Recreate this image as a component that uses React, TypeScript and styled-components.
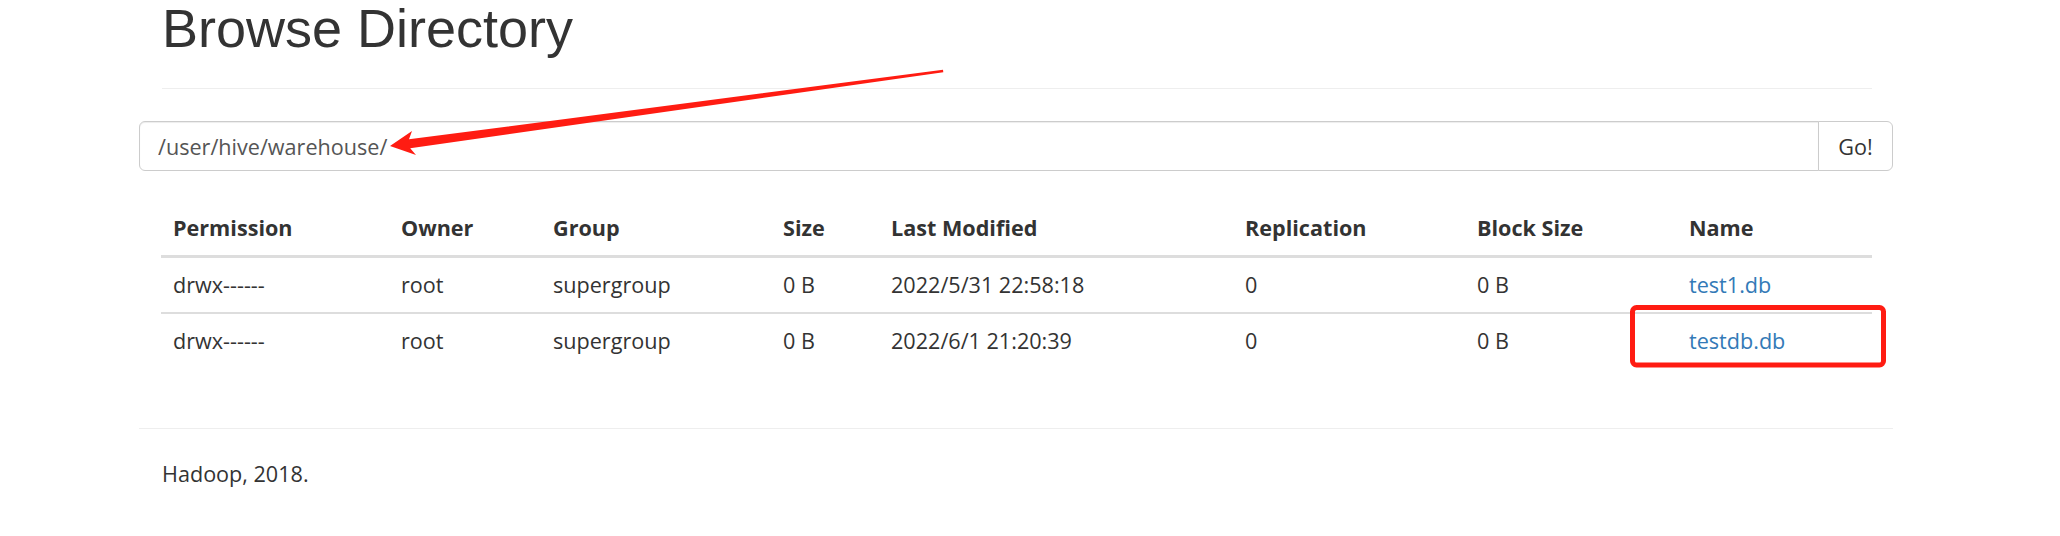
import styled, { createGlobalStyle } from "styled-components";

const GlobalStyle = createGlobalStyle`
  html, body {
    margin: 0;
    padding: 0;
    background: #fff;
  }
  body {
    font-family: "Open Sans", "Noto Sans", sans-serif;
    font-size: 21.6px;
    color: #333;
  }
`;

const files = [
  {
    permission: "drwx------",
    owner: "root",
    group: "supergroup",
    size: "0 B",
    modified: "2022/5/31 22:58:18",
    replication: "0",
    blockSize: "0 B",
    name: "test1.db",
  },
  {
    permission: "drwx------",
    owner: "root",
    group: "supergroup",
    size: "0 B",
    modified: "2022/6/1 21:20:39",
    replication: "0",
    blockSize: "0 B",
    name: "testdb.db",
  },
];

// column widths measured off the listing
const columns = [
  { label: "Permission", width: 228 },
  { label: "Owner", width: 152 },
  { label: "Group", width: 230 },
  { label: "Size", width: 108 },
  { label: "Last Modified", width: 354 },
  { label: "Replication", width: 232 },
  { label: "Block Size", width: 212 },
  { label: "Name", width: 195 },
];

const App = () => {
  return (
    <>
      <GlobalStyle />
      <Page>
        <Header>
          <Title>Browse Directory</Title>
        </Header>

        <SearchForm onSubmit={(e) => e.preventDefault()}>
          <PathInput type="text" defaultValue="/user/hive/warehouse/" />
          <GoButton type="button">Go!</GoButton>
        </SearchForm>

        <Listing>
          <colgroup>
            {columns.map((c) => (
              <col key={c.label} style={{ width: c.width }} />
            ))}
          </colgroup>
          <thead>
            <tr>
              {columns.map((c) => (
                <HeadCell key={c.label}>{c.label}</HeadCell>
              ))}
            </tr>
          </thead>
          <tbody>
            {files.map((f) => (
              <tr key={f.name}>
                <Cell>{f.permission}</Cell>
                <Cell>{f.owner}</Cell>
                <Cell>{f.group}</Cell>
                <Cell>{f.size}</Cell>
                <Cell>{f.modified}</Cell>
                <Cell>{f.replication}</Cell>
                <Cell>{f.blockSize}</Cell>
                <Cell>
                  <NameLink href="#">{f.name}</NameLink>
                </Cell>
              </tr>
            ))}
          </tbody>
        </Listing>

        <FooterRule />
        <FooterText>Hadoop, 2018.</FooterText>
      </Page>

      {/* red markup drawn on top of the screenshot */}
      <Annotations width="2060" height="536" viewBox="0 0 2060 536">
        <polygon
          fill="#ff1c12"
          points="390,146 412,131 409,139.3 943,69.8 943.3,72.2 410.2,148.2 416,155"
        />
        <rect
          x="1632.5"
          y="307.5"
          width="251"
          height="57.5"
          rx="4"
          fill="none"
          stroke="#ff1c12"
          strokeWidth="5"
        />
      </Annotations>
    </>
  );
};

export default App;

const Page = styled.div`
  width: 1754px;
  margin-left: 139px;
`;

const Header = styled.div`
  margin: 0 21px 0 23px;
  padding-bottom: 32px;
  border-bottom: 1px solid #eee;
`;

const Title = styled.h1`
  margin: 0;
  font-family: "Liberation Sans", Arial, sans-serif;
  font-size: 54px;
  font-weight: 400;
  line-height: 56px;
  color: #333;
`;

const SearchForm = styled.form`
  display: flex;
  height: 50px;
  margin: 32px 0 0;
`;

const PathInput = styled.input`
  flex: 1;
  box-sizing: border-box;
  height: 50px;
  padding: 0 18px;
  border: 1px solid #ccc;
  border-radius: 6px 0 0 6px;
  box-shadow: inset 0 1px 1px rgba(0, 0, 0, 0.075);
  font-family: "Open Sans", "Noto Sans", sans-serif;
  font-size: 21.6px;
  color: #555;
  outline: none;
`;

const GoButton = styled.button`
  box-sizing: border-box;
  width: 75px;
  height: 50px;
  margin-left: -1px;
  padding: 0;
  border: 1px solid #ccc;
  border-radius: 0 6px 6px 0;
  background: #fff;
  font-family: "Open Sans", "Noto Sans", sans-serif;
  font-size: 21.6px;
  color: #333;
  cursor: pointer;
`;

const Listing = styled.table`
  width: 1711px;
  margin: 30px 0 0 22px;
  border-collapse: collapse;
  border-spacing: 0;
  table-layout: fixed;
`;

const HeadCell = styled.th`
  padding: 12px;
  line-height: 30px;
  text-align: left;
  font-weight: 700;
  white-space: nowrap;
  border-bottom: 3px solid #ddd;
`;

const Cell = styled.td`
  padding: 12px;
  line-height: 30px;
  white-space: nowrap;
  border-top: 2px solid #ddd;

  tr:first-child > & {
    border-top: none;
  }
`;

const NameLink = styled.a`
  color: #337ab7;
  text-decoration: none;
`;

const FooterRule = styled.hr`
  margin: 60px 0 0;
  border: 0;
  border-top: 1px solid #eee;
`;

const FooterText = styled.p`
  margin: 30px 0 0 23px;
  line-height: 30px;
`;

const Annotations = styled.svg`
  position: absolute;
  top: 0;
  left: 0;
  pointer-events: none;
`;
